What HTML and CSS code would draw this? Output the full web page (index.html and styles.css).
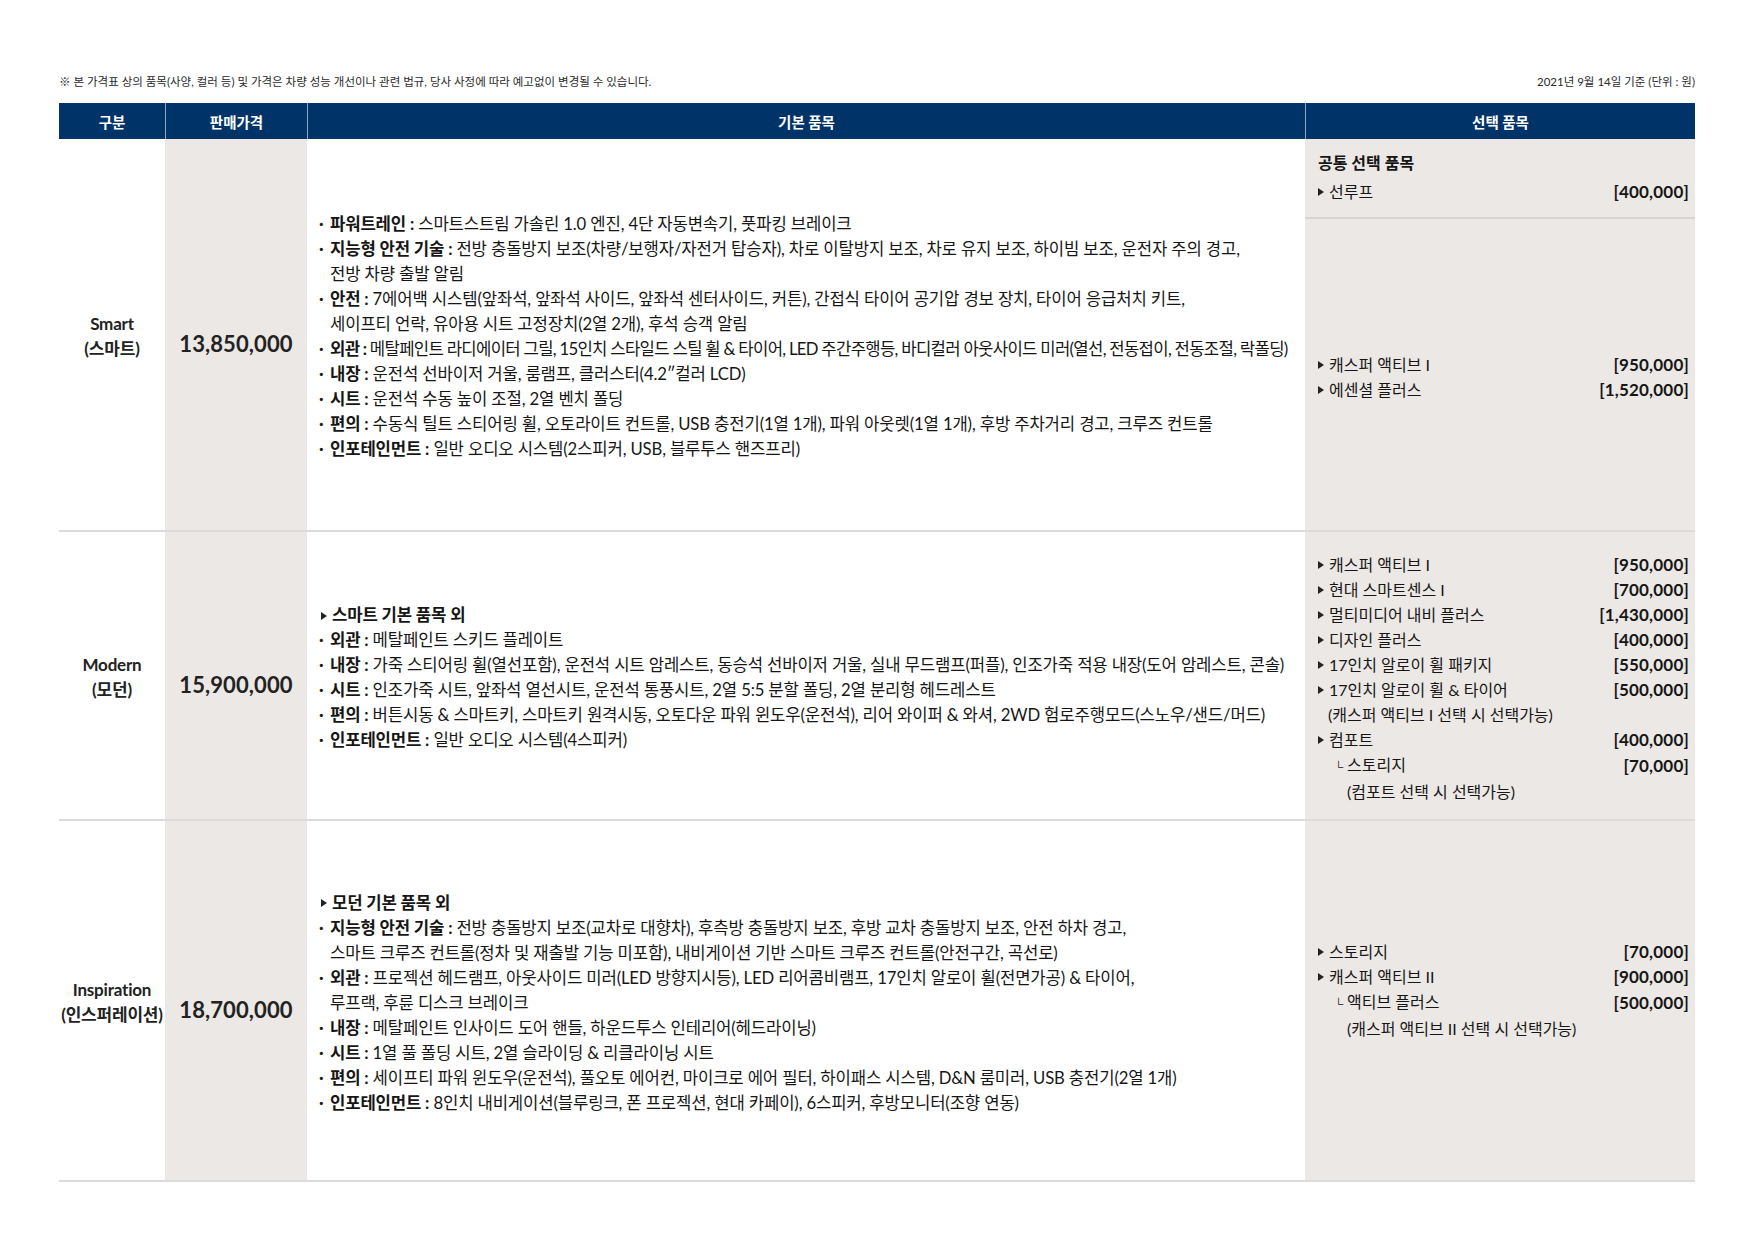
FILE: index.html
```html
<!DOCTYPE html>
<html lang="ko">
<head>
<meta charset="utf-8">
<title>캐스퍼 가격표</title>
<link rel="stylesheet" href="styles.css">
</head>
<body>
<div class="page">
  <div class="note-row">
    <span>※ 본 가격표 상의 품목(사양, 컬러 등) 및 가격은 차량 성능 개선이나 관련 법규, 당사 사정에 따라 예고없이 변경될 수 있습니다.</span>
    <span>2021년 9월 14일 기준 (단위 : 원)</span>
  </div>

  <div class="table">
    <div class="grid thead">
      <div class="th">구분</div>
      <div class="th">판매가격</div>
      <div class="th">기본 품목</div>
      <div class="th">선택 품목</div>
    </div>

    <div class="grid row row-smart">
      <div class="cell trim">Smart<br>(스마트)</div>
      <div class="cell price">13,850,000</div>
      <div class="cell basic">
        <ul class="feat">
          <li><span class="dot">·</span><span><b>파워트레인 :</b> 스마트스트림 가솔린 1.0 엔진, 4단 자동변속기, 풋파킹 브레이크</span></li>
          <li><span class="dot">·</span><span><b>지능형 안전 기술 :</b> 전방 충돌방지 보조(차량/보행자/자전거 탑승자), 차로 이탈방지 보조, 차로 유지 보조, 하이빔 보조, 운전자 주의 경고,<br>전방 차량 출발 알림</span></li>
          <li><span class="dot">·</span><span><b>안전 :</b> 7에어백 시스템(앞좌석, 앞좌석 사이드, 앞좌석 센터사이드, 커튼), 간접식 타이어 공기압 경보 장치, 타이어 응급처치 키트,<br>세이프티 언락, 유아용 시트 고정장치(2열 2개), 후석 승객 알림</span></li>
          <li class="tight"><span class="dot">·</span><span><b>외관 :</b> 메탈페인트 라디에이터 그릴, 15인치 스타일드 스틸 휠 &amp; 타이어, LED 주간주행등, 바디컬러 아웃사이드 미러(열선, 전동접이, 전동조절, 락폴딩)</span></li>
          <li><span class="dot">·</span><span><b>내장 :</b> 운전석 선바이저 거울, 룸램프, 클러스터(4.2″컬러 LCD)</span></li>
          <li><span class="dot">·</span><span><b>시트 :</b> 운전석 수동 높이 조절, 2열 벤치 폴딩</span></li>
          <li><span class="dot">·</span><span><b>편의 :</b> 수동식 틸트 스티어링 휠, 오토라이트 컨트롤, USB 충전기(1열 1개), 파워 아웃렛(1열 1개), 후방 주차거리 경고, 크루즈 컨트롤</span></li>
          <li><span class="dot">·</span><span><b>인포테인먼트 :</b> 일반 오디오 시스템(2스피커, USB, 블루투스 핸즈프리)</span></li>
        </ul>
      </div>
      <div class="cell opts split">
        <div class="common">
          <div class="common-title">공통 선택 품목</div>
          <div class="opt"><span class="name tri">선루프</span><b>[400,000]</b></div>
        </div>
        <div class="opt-list">
          <div class="opt"><span class="name tri">캐스퍼 액티브 I</span><b>[950,000]</b></div>
          <div class="opt"><span class="name tri">에센셜 플러스</span><b>[1,520,000]</b></div>
        </div>
      </div>
    </div>

    <div class="grid row row-modern">
      <div class="cell trim">Modern<br>(모던)</div>
      <div class="cell price">15,900,000</div>
      <div class="cell basic">
        <ul class="feat">
          <li class="head"><span class="tri-b"></span><b>스마트 기본 품목 외</b></li>
          <li><span class="dot">·</span><span><b>외관 :</b> 메탈페인트 스키드 플레이트</span></li>
          <li><span class="dot">·</span><span><b>내장 :</b> 가죽 스티어링 휠(열선포함), 운전석 시트 암레스트, 동승석 선바이저 거울, 실내 무드램프(퍼플), 인조가죽 적용 내장(도어 암레스트, 콘솔)</span></li>
          <li><span class="dot">·</span><span><b>시트 :</b> 인조가죽 시트, 앞좌석 열선시트, 운전석 통풍시트, 2열 5:5 분할 폴딩, 2열 분리형 헤드레스트</span></li>
          <li><span class="dot">·</span><span><b>편의 :</b> 버튼시동 &amp; 스마트키, 스마트키 원격시동, 오토다운 파워 윈도우(운전석), 리어 와이퍼 &amp; 와셔, 2WD 험로주행모드(스노우/샌드/머드)</span></li>
          <li><span class="dot">·</span><span><b>인포테인먼트 :</b> 일반 오디오 시스템(4스피커)</span></li>
        </ul>
      </div>
      <div class="cell opts">
        <div class="opt-list">
          <div class="opt"><span class="name tri">캐스퍼 액티브 I</span><b>[950,000]</b></div>
          <div class="opt"><span class="name tri">현대 스마트센스 I</span><b>[700,000]</b></div>
          <div class="opt"><span class="name tri">멀티미디어 내비 플러스</span><b>[1,430,000]</b></div>
          <div class="opt"><span class="name tri">디자인 플러스</span><b>[400,000]</b></div>
          <div class="opt"><span class="name tri">17인치 알로이 휠 패키지</span><b>[550,000]</b></div>
          <div class="opt"><span class="name tri">17인치 알로이 휠 &amp; 타이어</span><b>[500,000]</b></div>
          <div class="opt sub1">(캐스퍼 액티브 I 선택 시 선택가능)</div>
          <div class="opt"><span class="name tri">컴포트</span><b>[400,000]</b></div>
          <div class="opt"><span class="name child"><span class="corner">└</span>스토리지</span><b>[70,000]</b></div>
          <div class="opt sub2">(컴포트 선택 시 선택가능)</div>
        </div>
      </div>
    </div>

    <div class="grid row row-insp">
      <div class="cell trim">Inspiration<br>(인스퍼레이션)</div>
      <div class="cell price">18,700,000</div>
      <div class="cell basic">
        <ul class="feat">
          <li class="head"><span class="tri-b"></span><b>모던 기본 품목 외</b></li>
          <li><span class="dot">·</span><span><b>지능형 안전 기술 :</b> 전방 충돌방지 보조(교차로 대향차), 후측방 충돌방지 보조, 후방 교차 충돌방지 보조, 안전 하차 경고,<br>스마트 크루즈 컨트롤(정차 및 재출발 기능 미포함), 내비게이션 기반 스마트 크루즈 컨트롤(안전구간, 곡선로)</span></li>
          <li><span class="dot">·</span><span><b>외관 :</b> 프로젝션 헤드램프, 아웃사이드 미러(LED 방향지시등), LED 리어콤비램프, 17인치 알로이 휠(전면가공) &amp; 타이어,<br>루프랙, 후륜 디스크 브레이크</span></li>
          <li><span class="dot">·</span><span><b>내장 :</b> 메탈페인트 인사이드 도어 핸들, 하운드투스 인테리어(헤드라이닝)</span></li>
          <li><span class="dot">·</span><span><b>시트 :</b> 1열 풀 폴딩 시트, 2열 슬라이딩 &amp; 리클라이닝 시트</span></li>
          <li><span class="dot">·</span><span><b>편의 :</b> 세이프티 파워 윈도우(운전석), 풀오토 에어컨, 마이크로 에어 필터, 하이패스 시스템, D&amp;N 룸미러, USB 충전기(2열 1개)</span></li>
          <li><span class="dot">·</span><span><b>인포테인먼트 :</b> 8인치 내비게이션(블루링크, 폰 프로젝션, 현대 카페이), 6스피커, 후방모니터(조향 연동)</span></li>
        </ul>
      </div>
      <div class="cell opts">
        <div class="opt-list lifted">
          <div class="opt"><span class="name tri">스토리지</span><b>[70,000]</b></div>
          <div class="opt"><span class="name tri">캐스퍼 액티브 II</span><b>[900,000]</b></div>
          <div class="opt"><span class="name child"><span class="corner">└</span>액티브 플러스</span><b>[500,000]</b></div>
          <div class="opt sub2">(캐스퍼 액티브 II 선택 시 선택가능)</div>
        </div>
      </div>
    </div>
  </div>
</div>
</body>
</html>
```

FILE: styles.css
```css
* { box-sizing: border-box; }

html, body {
  margin: 0;
  padding: 0;
  background: #ffffff;
}

body {
  font-family: "Lato", "Noto Sans CJK KR", sans-serif;
  color: #161616;
  width: 1754px;
  height: 1240px;
  overflow: hidden;
}

.page {
  padding: 74px 59px 0 59px;
}

.note-row {
  display: flex;
  justify-content: space-between;
  font-size: 11.5px;
  line-height: 16px;
  color: #2a2a2a;
  margin-bottom: 13px;
  white-space: nowrap;
}

.table {
  width: 1636px;
}

.grid {
  display: grid;
  grid-template-columns: 106px 142px 998px 390px;
}

.thead {
  height: 36px;
  background: #003468;
  color: #ffffff;
}

.th {
  display: flex;
  align-items: center;
  justify-content: center;
  font-weight: 700;
  font-size: 14.5px;
}

.th + .th {
  border-left: 1px solid #8ea4c2;
}

.row {
  border-bottom: 2px solid #dcdcdc;
}

.row-smart { height: 393px; }
.row-modern { height: 289px; }
.row-insp { height: 361px; }

.cell {
  display: flex;
  flex-direction: column;
  justify-content: center;
}

.trim {
  align-items: center;
  text-align: center;
  font-weight: 700;
  font-size: 17px;
  line-height: 25px;
  color: #222;
  letter-spacing: -0.2px;
  padding-top: 2px;
}

.price {
  background: #ece8e5;
  align-items: center;
  font-weight: 700;
  font-size: 22px;
  padding-top: 18px;
  color: #222;
  letter-spacing: 0.1px;
}

.basic {
  padding-left: 12px;
  padding-top: 5px;
  min-width: 0;
}

.feat {
  list-style: none;
  margin: 0;
  padding: 0;
  font-size: 16.7px;
  line-height: 25px;
  white-space: nowrap;
  letter-spacing: -0.15px;
}

.feat li {
  display: flex;
}

.feat li.tight {
  letter-spacing: -0.7px;
}

.feat b {
  font-weight: 700;
}

.dot {
  width: 11px;
  flex: none;
  font-weight: 700;
  letter-spacing: 0;
}

.feat .head {
  align-items: center;
}

.tri-b {
  display: inline-block;
  width: 0;
  height: 0;
  border-left: 6px solid #222;
  border-top: 4px solid transparent;
  border-bottom: 4px solid transparent;
  margin-left: 2px;
  margin-right: 5px;
}

.opts {
  background: #ece8e5;
}

.opts.split {
  justify-content: flex-start;
}

.common {
  padding: 11px 6px 13px 13px;
  border-bottom: 2px solid #d8d4d1;
}

.common-title {
  font-weight: 700;
  font-size: 16px;
  line-height: 25px;
  margin-bottom: 4px;
}

.opts.split .opt-list {
  flex: 1;
  display: flex;
  flex-direction: column;
  justify-content: center;
}

.opt-list {
  padding: 4px 6px 0 13px;
}

.opt-list.lifted {
  padding-bottom: 25px;
}

.opt {
  display: flex;
  justify-content: space-between;
  align-items: center;
  font-size: 16px;
  line-height: 25px;
  white-space: nowrap;
}

.opt b {
  font-weight: 700;
  font-size: 17px;
  letter-spacing: 0.2px;
}

.tri::before {
  content: "";
  display: inline-block;
  width: 0;
  height: 0;
  border-left: 6px solid #222;
  border-top: 4px solid transparent;
  border-bottom: 4px solid transparent;
  margin-right: 5px;
  vertical-align: 2px;
}

.child {
  padding-left: 16px;
}

.corner {
  display: inline-block;
  width: 13px;
  font-size: 12px;
}

.sub1 {
  padding-left: 10px;
}

.sub2 {
  padding-left: 29px;
}
```
